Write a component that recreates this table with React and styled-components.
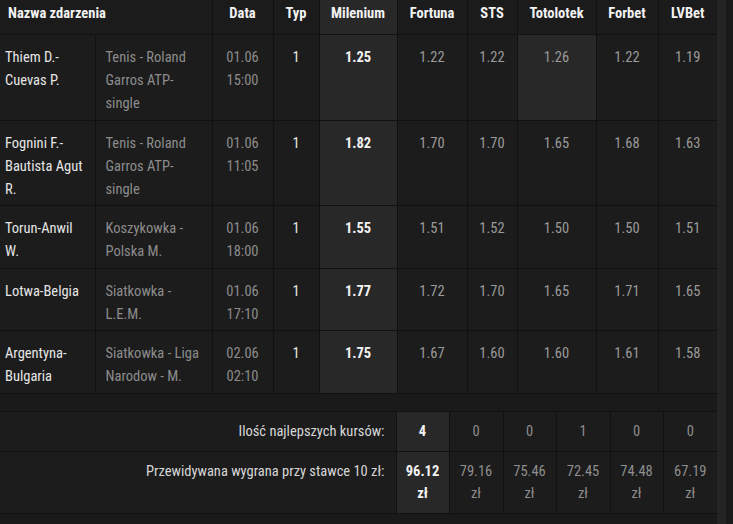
import styled, { createGlobalStyle } from "styled-components";

const GlobalStyle = createGlobalStyle`
    html, body {
        margin: 0;
        padding: 0;
        background: #1a1a1a;
    }
    body {
        font-family: "Roboto Condensed", "Liberation Sans Narrow", Roboto, "Liberation Sans", sans-serif;
    }
`;

const Page = styled.div`
    display: flex;
    width: 733px;
    height: 524px;
    overflow: hidden;
    background: #1a1a1a;
`;

const Content = styled.div`
    width: 717px;
    display: flex;
    flex-direction: column;
    gap: 17px;
`;

// pasek po prawej stronie (tło przewijania)
const SideStrip = styled.div`
    width: 9px;
    background: #242424;
`;

const Table = styled.table`
    width: 717px;
    table-layout: fixed;
    border-collapse: collapse;
    background: #1c1c1c;
    font-size: 14.5px;
`;

const HeadCell = styled.th`
    padding: 2px 6px 9px;
    padding-left: ${(p) => (p.$align === "left" ? "8px" : "6px")};
    line-height: 23px;
    font-weight: 700;
    color: #f2f2f2;
    background: ${(p) => (p.$hl ? "#282828" : "#1b1b1b")};
    text-align: ${(p) => p.$align || "center"};
    border-bottom: 1px solid #111;
    border-left: 1px solid #111;
    &:first-child {
        border-left: none;
    }
`;

const Cell = styled.td`
    padding: 11px 5px 4.6px;
    padding-left: ${(p) => (p.$first ? "5px" : p.$align === "left" ? "10px" : "5px")};
    line-height: 23px;
    vertical-align: top;
    text-align: ${(p) => p.$align || "center"};
    color: ${(p) => p.$color || "#9a9a9a"};
    font-weight: ${(p) => (p.$bold ? 700 : 400)};
    background: ${(p) => (p.$hl ? "#282828" : "transparent")};
    border-bottom: 1px solid #111;
    border-left: 1px solid #111;
    &:first-child {
        border-left: none;
    }
`;

const SumCell = styled.td`
    padding: 9px 3px 8px;
    padding-right: ${(p) => (p.$align === "right" ? "11px" : "3px")};
    line-height: 22px;
    vertical-align: top;
    text-align: ${(p) => p.$align || "center"};
    color: ${(p) => p.$color || "#8e8e8e"};
    font-weight: ${(p) => (p.$bold ? 700 : 400)};
    background: ${(p) => (p.$hl ? "#282828" : "transparent")};
    border-top: 1px solid #111;
    border-bottom: 1px solid #111;
    border-left: 1px solid #111;
    &:first-child {
        border-left: none;
    }
`;

const bookies = ["Milenium", "Fortuna", "STS", "Totolotek", "Forbet", "LVBet"];
const widths = [95, 117, 61, 46, 78, 70, 50, 79, 62, 59];
const sumWidths = [396, 53, 54, 53, 54, 53, 54];

const events = [
    { name: "Thiem D.-Cuevas P.", cat: "Tenis - Roland Garros ATP-single", date: "01.06", time: "15:00", odds: ["1.25", "1.22", "1.22", "1.26", "1.22", "1.19"] },
    { name: "Fognini F.-Bautista Agut R.", cat: "Tenis - Roland Garros ATP-single", date: "01.06", time: "11:05", odds: ["1.82", "1.70", "1.70", "1.65", "1.68", "1.63"] },
    { name: "Torun-Anwil W.", cat: "Koszykowka - Polska M.", date: "01.06", time: "18:00", odds: ["1.55", "1.51", "1.52", "1.50", "1.50", "1.51"] },
    { name: "Lotwa-Belgia", cat: "Siatkowka - L.E.M.", date: "01.06", time: "17:10", odds: ["1.77", "1.72", "1.70", "1.65", "1.71", "1.65"] },
    { name: "Argentyna-Bulgaria", cat: "Siatkowka - Liga Narodow - M.", date: "02.06", time: "02:10", odds: ["1.75", "1.67", "1.60", "1.60", "1.61", "1.58"] },
];

const bestCount = ["4", "0", "0", "1", "0", "0"];
const winnings = ["96.12", "79.16", "75.46", "72.45", "74.48", "67.19"];

const App = () => {
    return (
        <Page>
            <GlobalStyle />
            <Content>
                <Table>
                    <colgroup>
                        {widths.map((w, i) => (
                            <col key={i} style={{ width: w }} />
                        ))}
                    </colgroup>
                    <thead>
                        <tr>
                            <HeadCell colSpan={2} $align="left">Nazwa zdarzenia</HeadCell>
                            <HeadCell>Data</HeadCell>
                            <HeadCell>Typ</HeadCell>
                            {bookies.map((b, i) => (
                                <HeadCell key={b} $hl={i === 0}>{b}</HeadCell>
                            ))}
                        </tr>
                    </thead>
                    <tbody>
                        {events.map((ev) => {
                            const max = Math.max(...ev.odds.map(Number));
                            return (
                                <tr key={ev.name}>
                                    <Cell $first $align="left" $color="#e6e6e6">{ev.name}</Cell>
                                    <Cell $align="left" $color="#8c8c8c">{ev.cat}</Cell>
                                    <Cell $color="#8c8c8c">{ev.date}<br />{ev.time}</Cell>
                                    <Cell $color="#e6e6e6">1</Cell>
                                    {ev.odds.map((o, i) => (
                                        <Cell
                                            key={i}
                                            $hl={i === 0 || Number(o) === max}
                                            $bold={i === 0}
                                            $color={i === 0 ? "#f2f2f2" : "#9a9a9a"}
                                        >
                                            {o}
                                        </Cell>
                                    ))}
                                </tr>
                            );
                        })}
                    </tbody>
                </Table>

                <Table>
                    <colgroup>
                        {sumWidths.map((w, i) => (
                            <col key={i} style={{ width: w }} />
                        ))}
                    </colgroup>
                    <tbody>
                        <tr>
                            <SumCell $align="right" $color="#d6d6d6">Ilość najlepszych kursów:</SumCell>
                            {bestCount.map((c, i) => (
                                <SumCell key={i} $hl={i === 0} $bold={i === 0} $color={i === 0 ? "#f2f2f2" : undefined}>{c}</SumCell>
                            ))}
                        </tr>
                        <tr>
                            <SumCell $align="right" $color="#d6d6d6">Przewidywana wygrana przy stawce 10 zł:</SumCell>
                            {winnings.map((w, i) => (
                                <SumCell key={i} $hl={i === 0} $bold={i === 0} $color={i === 0 ? "#f2f2f2" : undefined}>
                                    {w}<br />zł
                                </SumCell>
                            ))}
                        </tr>
                    </tbody>
                </Table>
            </Content>
            <SideStrip />
        </Page>
    );
};

export default App;
